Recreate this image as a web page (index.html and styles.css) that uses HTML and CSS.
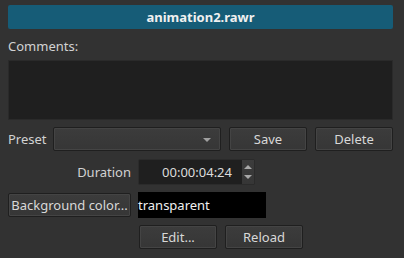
FILE: index.html
```html
<!DOCTYPE html>
<html lang="en">
<head>
    <meta charset="UTF-8">
    <title>Animation</title>
    <link rel="stylesheet" href="styles.css">
</head>
<body>
    <div class="panel">
        <div class="title-bar">animation2.rawr</div>

        <div class="label comments-label">Comments:</div>
        <div class="comments-box"></div>

        <div class="preset-row">
            <span class="label">Preset</span>
            <div class="combo">
                <span class="combo-arrow"></span>
            </div>
            <button class="btn preset-btn">Save</button>
            <button class="btn preset-btn">Delete</button>
        </div>

        <div class="form-grid">
            <span class="label duration-label">Duration</span>
            <div class="spinbox">
                <span class="spin-value">00:00:04:24</span>
                <div class="spin-arrows">
                    <span class="arrow-up"></span>
                    <span class="arrow-down"></span>
                </div>
            </div>

            <button class="btn bg-btn">Background color...</button>
            <div class="color-box">transparent</div>

            <span></span>
            <div class="action-row">
                <button class="btn action-btn">Edit...</button>
                <button class="btn action-btn">Reload</button>
            </div>
        </div>
    </div>
</body>
</html>
```

FILE: styles.css
```css
body {
    margin: 0;
    background-color: #323232;
    font-family: "Noto Sans", sans-serif;
    font-size: 13px;
    color: #dcdcdc;
}
.panel {
    padding: 5px 11px 0 8px;
}
.title-bar {
    height: 24px;
    line-height: 24px;
    background-color: #165c77;
    color: #f0f0f0;
    font-weight: bold;
    text-align: center;
    border-radius: 2px;
}
.label {
    color: #d2d2d2;
}
.comments-label {
    height: 18px;
    line-height: 18px;
    margin-top: 8px;
    margin-bottom: 5px;
}
.comments-box {
    height: 58px;
    background-color: #1f1f1f;
    border: 1px solid #2a2a2a;
}
.preset-row {
    display: flex;
    align-items: center;
    margin-top: 7px;
    height: 24px;
}
.preset-row .label {
    width: 45px;
}
.btn {
    font-family: "Noto Sans", sans-serif;
    font-size: 13px;
    color: #d8d8d8;
    height: 24px;
    padding: 0 6px;
    white-space: nowrap;
    background: linear-gradient(#3c3c3c, #363636);
    border: 1px solid #1f1f1f;
    border-radius: 2px;
    box-shadow: inset 0 0 0 1px #444444;
}
.combo {
    position: relative;
    box-sizing: border-box;
    width: 168px;
    height: 24px;
    background: linear-gradient(#3c3c3c, #363636);
    border: 1px solid #1f1f1f;
    border-radius: 2px;
    box-shadow: inset 0 0 0 1px #444444;
}
.combo-arrow {
    position: absolute;
    right: 9px;
    top: 10px;
    border-left: 4px solid transparent;
    border-right: 4px solid transparent;
    border-top: 4px solid #a0a0a0;
}
.preset-btn {
    width: 78px;
    margin-left: 8px;
}
.form-grid {
    display: grid;
    grid-template-columns: 123px auto;
    column-gap: 7px;
    row-gap: 7px;
    margin-top: 8px;
    align-items: center;
}
.duration-label {
    text-align: right;
}
.spinbox {
    display: flex;
    width: 117px;
    height: 26px;
    box-sizing: border-box;
    border: 1px solid #2b2b2b;
    border-radius: 2px;
    background-color: #1f1f1f;
}
.spin-value {
    flex: 1;
    text-align: right;
    line-height: 24px;
    padding-right: 9px;
    color: #dcdcdc;
}
.spin-arrows {
    width: 12px;
    display: flex;
    flex-direction: column;
    justify-content: space-evenly;
    align-items: center;
    background: linear-gradient(#3c3c3c, #363636);
    border-left: 1px solid #1f1f1f;
}
.arrow-up {
    border-left: 4px solid transparent;
    border-right: 4px solid transparent;
    border-bottom: 4px solid #a8a8a8;
}
.arrow-down {
    border-left: 4px solid transparent;
    border-right: 4px solid transparent;
    border-top: 4px solid #a8a8a8;
}
.bg-btn {
    width: 123px;
    padding: 0;
}
.color-box {
    width: 128px;
    height: 26px;
    line-height: 26px;
    background-color: #000000;
    color: #f0f0f0;
}
.action-row {
    display: flex;
    gap: 8px;
    margin-left: 1px;
}
.action-btn {
    width: 78px;
}
```
